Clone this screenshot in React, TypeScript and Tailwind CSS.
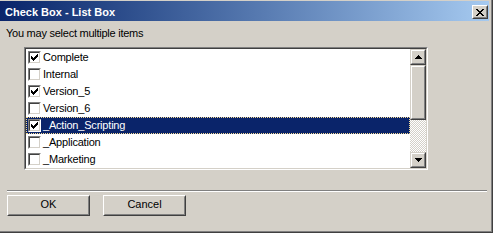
import React from "react";

const items: { label: string; checked: boolean; selected?: boolean }[] = [
  { label: "Complete", checked: true },
  { label: "Internal", checked: false },
  { label: "Version_5", checked: true },
  { label: "Version_6", checked: false },
  { label: "_Action_Scripting", checked: true, selected: true },
  { label: "_Application", checked: false },
  { label: "_Marketing", checked: false },
];

function CheckBox({ checked }: { checked: boolean }) {
  return (
    <div className="w-[13px] h-[13px] shrink-0 border border-t-[#808080] border-l-[#808080] border-r-white border-b-white">
      <div className="w-full h-full border border-t-[#404040] border-l-[#404040] border-r-[#d4d0c8] border-b-[#d4d0c8] bg-white relative">
        {checked && (
          <svg width="7" height="7" viewBox="0 0 7 7" className="absolute left-[1px] top-[1px]" shapeRendering="crispEdges">
            <path
              fill="#000"
              d="M6 0h1v1h-1z M5 1h2v1h-2z M0 2h1v1h-1z M4 2h3v1h-3z M0 3h2v1h-2z M3 3h3v1h-3z M0 4h5v1h-5z M1 5h3v1h-3z M2 6h1v1h-1z"
            />
          </svg>
        )}
      </div>
    </div>
  );
}

function ScrollBtn({ dir }: { dir: "up" | "down" }) {
  return (
    <div className="h-[16px] w-[16px] shrink-0 border border-t-[#d4d0c8] border-l-[#d4d0c8] border-r-[#404040] border-b-[#404040]">
      <div className="w-full h-full border border-t-white border-l-white border-r-[#808080] border-b-[#808080] bg-[#d4d0c8] flex items-center justify-center">
        <svg width="7" height="4" viewBox="0 0 7 4" shapeRendering="crispEdges">
          <path
            fill="#000"
            d={
              dir === "up"
                ? "M3 0h1v1h-1z M2 1h3v1h-3z M1 2h5v1h-5z M0 3h7v1h-7z"
                : "M0 0h7v1h-7z M1 1h5v1h-5z M2 2h3v1h-3z M3 3h1v1h-1z"
            }
          />
        </svg>
      </div>
    </div>
  );
}

function Button({ children }: { children: React.ReactNode }) {
  return (
    <div className="w-[83px] h-[21px] border border-t-white border-l-white border-r-[#404040] border-b-[#404040]">
      <div className="w-full h-full border border-t-[#d4d0c8] border-l-[#d4d0c8] border-r-[#808080] border-b-[#808080] flex items-center justify-center pb-[2px] text-[11px] text-black">
        {children}
      </div>
    </div>
  );
}

export default function App() {
  return (
    <div
      className="w-[493px] h-[233px] bg-[#d4d0c8] border-r border-b border-r-[#404040] border-b-[#404040] overflow-hidden"
      style={{ fontFamily: '"Liberation Sans", Arial, sans-serif' }}
    >
      <div className="h-full border-r border-b border-r-[#808080] border-b-[#808080] pt-px pr-[2px] flex flex-col">
        {/* Title bar */}
        <div className="h-[20px] shrink-0 bg-linear-to-r from-[#0a246a] to-[#a6caf0] flex items-start justify-between">
          <div className="pl-[5px] pt-[1px] leading-[20px] text-[11px] font-bold text-white">Check Box - List Box</div>
          <div className="mt-[4px] mr-[1px] w-[16px] h-[14px] border border-t-white border-l-white border-r-[#404040] border-b-[#404040]">
            <div className="w-full h-full border border-t-[#d4d0c8] border-l-[#d4d0c8] border-r-[#808080] border-b-[#808080] bg-[#d4d0c8] flex items-center justify-center">
              <svg width="8" height="7" viewBox="0 0 8 7" shapeRendering="crispEdges">
                <path
                  fill="#000"
                  d="M0 0h2v1h-2z M6 0h2v1h-2z M1 1h2v1h-2z M5 1h2v1h-2z M2 2h4v1h-4z M3 3h2v1h-2z M2 4h4v1h-4z M1 5h2v1h-2z M5 5h2v1h-2z M0 6h2v1h-2z M6 6h2v1h-2z"
                />
              </svg>
            </div>
          </div>
        </div>

        {/* Label */}
        <div className="mt-[6px] pl-[6px] leading-[13px] text-[11px] tracking-[-0.25px] text-black">
          You may select multiple items
        </div>

        {/* List box */}
        <div className="mt-[7px] ml-[24px] w-[404px] h-[123px] shrink-0 border border-t-[#808080] border-l-[#808080] border-r-white border-b-white">
          <div className="w-full h-full border border-t-[#404040] border-l-[#404040] border-r-[#d4d0c8] border-b-[#d4d0c8] bg-white flex overflow-hidden">
            <div className="flex-1 flex flex-col">
              {items.map((it) => (
                <div
                  key={it.label}
                  className={
                    it.selected
                      ? "h-[17px] shrink-0 flex items-center pl-[1px] bg-[#0a246a] border border-dotted border-[#f5db95] text-white"
                      : "h-[17px] shrink-0 flex items-center pl-[2px] text-black"
                  }
                >
                  <CheckBox checked={it.checked} />
                  <span className="ml-[2px] text-[11px] leading-[17px] tracking-[-0.2px] whitespace-nowrap">{it.label}</span>
                </div>
              ))}
            </div>
            <div className="w-[16px] shrink-0 flex flex-col">
              <ScrollBtn dir="up" />
              <div className="h-[55px] shrink-0 border border-t-[#d4d0c8] border-l-[#d4d0c8] border-r-[#404040] border-b-[#404040]">
                <div className="w-full h-full border border-t-white border-l-white border-r-[#808080] border-b-[#808080] bg-[#d4d0c8]" />
              </div>
              <div className="flex-1 bg-[repeating-conic-gradient(#d4d0c8_0%_25%,#ffffff_0%_50%)] bg-size-[2px_2px]" />
              <ScrollBtn dir="down" />
            </div>
          </div>
        </div>

        {/* Separator */}
        <div className="mt-[20px] ml-[7px] w-[480px] h-[2px] shrink-0 border-t border-t-[#808080] border-b border-b-white" />

        {/* Buttons */}
        <div className="mt-[3px] ml-[7px] flex gap-[13px]">
          <Button>OK</Button>
          <Button>Cancel</Button>
        </div>
      </div>
    </div>
  );
}
